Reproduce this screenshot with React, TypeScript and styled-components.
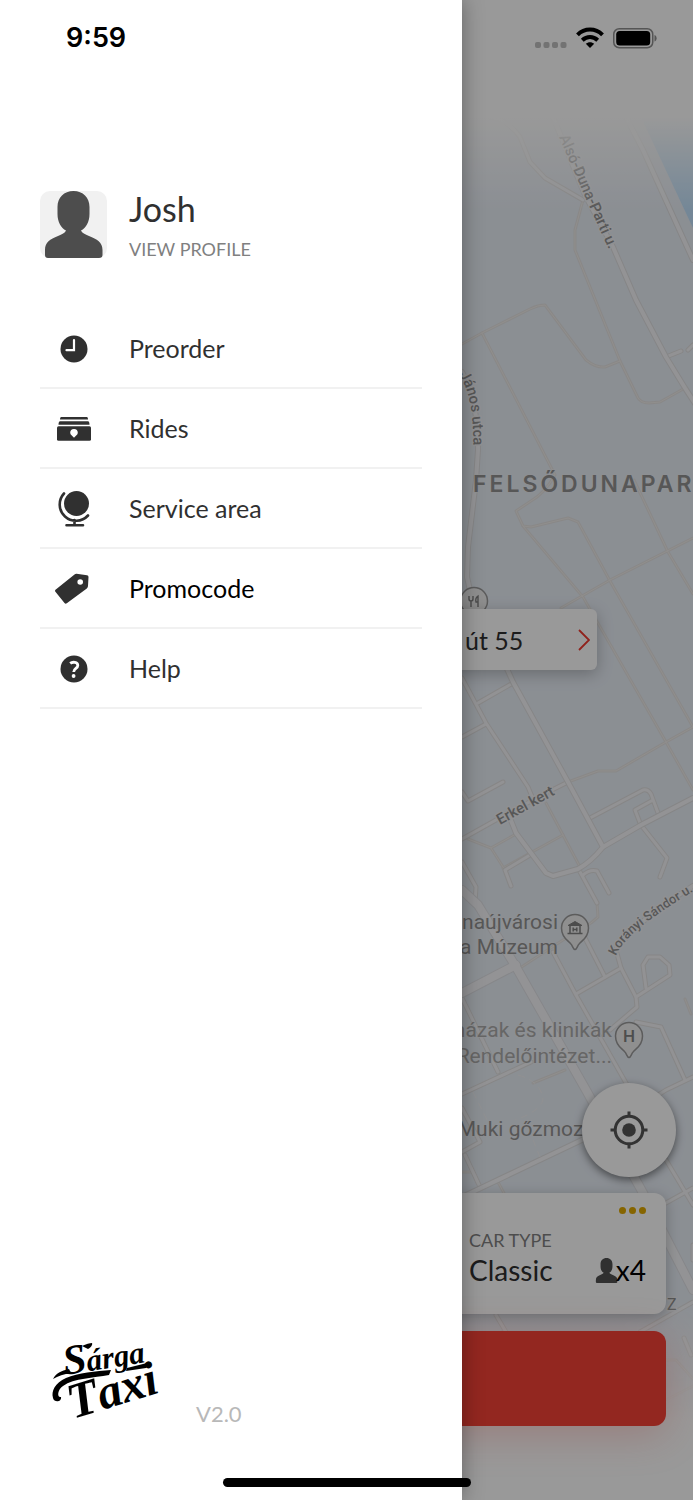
import React from "react";
import styled, { createGlobalStyle } from "styled-components";

const GlobalStyle = createGlobalStyle`
  *, *::before, *::after { box-sizing: border-box; }
  body { margin: 0; background: #ffffff; font-family: Lato, "Liberation Sans", sans-serif; }
  button { border: 0; padding: 0; background: none; font: inherit; color: inherit; text-align: left; cursor: pointer; }
  a { color: inherit; text-decoration: none; }
  svg { display: block; }
`;

const Screen = styled.div`
  position: relative;
  min-height: 100vh;
  display: flex;
  flex-direction: column;
  overflow: hidden;
`;

const MapLayer = styled.div`
  position: absolute;
  inset: 0;
  svg { width: 100%; height: 100%; }
`;

const Booking = styled.main`
  position: relative;
  flex: 1;
  display: flex;
  flex-direction: column;
  padding: 609px 27px 74px;
`;

const AddressCard = styled.button`
  display: flex;
  align-items: center;
  justify-content: space-between;
  height: 61px;
  margin: 0 69px 24px;
  padding: 0 7px 0 369px;
  border-radius: 6px;
  background: #ffffff;
  color: #303030;
  font-size: 25px;
  box-shadow: 0 4px 16px rgba(0, 0, 0, 0.25);
`;

const LocateButton = styled.button`
  display: flex;
  align-items: center;
  justify-content: center;
  align-self: flex-end;
  width: 94px;
  height: 94px;
  margin: auto -10px 16px 0;
  border-radius: 50%;
  background: #ffffff;
  box-shadow: 0 3px 8px rgba(0, 0, 0, 0.5);
`;

const CarCard = styled.section`
  display: flex;
  flex-direction: column;
  align-items: flex-end;
  height: 121px;
  margin-bottom: 17px;
  padding: 14px 20px 12px;
  border-radius: 12px;
  background: #ffffff;
  box-shadow: 0 3px 14px rgba(0, 0, 0, 0.25);
`;

const MoreButton = styled.button`
  display: flex;
  gap: 3px;
  height: 8px;
  margin-bottom: 13px;
`;

const Dot = styled.span`
  width: 7px;
  height: 7px;
  border-radius: 50%;
  background: #e0a800;
`;

const CarInfo = styled.div`
  width: 177px;
`;

const Caption = styled.div`
  font-size: 18px;
  line-height: 24px;
  color: #808080;
`;

const CarRow = styled.div`
  display: flex;
  align-items: center;
  justify-content: space-between;
  font-size: 28px;
  line-height: 36px;
  color: #303030;
`;

const Seats = styled.span`
  display: flex;
  align-items: center;
  color: #000000;
  svg { margin-right: -3px; }
`;

const OrderButton = styled.button`
  height: 95px;
  border-radius: 12px;
  background: #f54136;
  box-shadow: 0 8px 40px rgba(245, 65, 54, 0.25);
`;

const Dim = styled.div`
  position: absolute;
  inset: 0;
  background: rgba(0, 0, 0, 0.4);
`;

const Drawer = styled.aside`
  position: absolute;
  top: 0;
  bottom: 0;
  left: 0;
  width: calc(100% * 2 / 3);
  display: flex;
  flex-direction: column;
  padding: 191px 40px 80px;
  background: #ffffff;
  box-shadow: 0 0 20px rgba(0, 0, 0, 0.35);
`;

const Profile = styled.a`
  display: flex;
  gap: 22px;
  margin-bottom: 48px;
`;

const Avatar = styled.span`
  width: 67px;
  height: 67px;
  border-radius: 10px;
  background: #f1f1f1;
`;

const ProfileText = styled.span`
  display: flex;
  flex-direction: column;
`;

const Name = styled.span`
  font-size: 34px;
  line-height: 36px;
  color: #303030;
`;

const ProfileCaption = styled(Caption)`
  margin-top: 10px;
`;

const Menu = styled.ul`
  margin: 0;
  padding: 0;
  list-style: none;
`;

const MenuItem = styled.li`
  border-bottom: 2px solid #f1f1f1;
`;

const MenuLink = styled.a<{ $active?: boolean }>`
  display: flex;
  align-items: center;
  gap: 22px;
  height: 78px;
  font-size: 25px;
  line-height: 32px;
  color: ${(p) => (p.$active ? "#000000" : "#303030")};
`;

const MenuIcon = styled.span`
  display: flex;
  justify-content: center;
  width: 67px;
  padding-top: 2px;
`;

const Footer = styled.footer`
  display: flex;
  align-items: flex-end;
  gap: 32px;
  margin-top: auto;
  padding-left: 12px;
`;

const Version = styled.span`
  font-size: 22px;
  line-height: 28px;
  margin-bottom: -8px;
  color: #b8b8b8;
`;

const StatusBar = styled.header`
  position: absolute;
  top: 0;
  left: 0;
  right: 0;
  display: flex;
  align-items: center;
  justify-content: space-between;
  height: 76px;
  padding: 0 36px 0 66px;
  color: #000000;
  font: 600 27px/32px Inter, "Liberation Sans", sans-serif;
`;

const HomeIndicator = styled.div`
  position: absolute;
  bottom: 13px;
  left: 50%;
  width: 248px;
  height: 9px;
  border-radius: 5px;
  background: #000000;
  transform: translateX(-50%);
`;

const PersonShape = ({ size, fill }: { size: number; fill: string }) => (
  <svg width={size} height={size} viewBox="0 0 67 67" fill={fill} aria-hidden="true">
    <path d="M33.500 0C43 0 49.500 6.500 49.500 16V23C49.500 31 46 37 41 39.500C42 42 45 43 49 45C57 48.500 62.500 51 62.500 59V64Q62.500 67 59 67H8Q5 67 5 64V59C5 51 10 48.500 18 45C22 43 25 42 26 39.500C21 37 17.500 31 17.500 23V16C17.500 6.500 24 0 33.500 0Z" />
  </svg>
);

const ClockIcon = () => (
  <svg width="28" height="28" viewBox="0 0 28 28" aria-hidden="true">
    <circle cx="14" cy="14" r="13.500" fill="#303030" />
    <path d="M14 5V15.200H6.500" fill="none" stroke="#fff" strokeWidth="2.200" strokeLinecap="round" />
  </svg>
);

const RidesIcon = () => (
  <svg width="34" height="24" viewBox="0 0 34 24" fill="#303030" aria-hidden="true">
    <path d="M4 0H30Q31 0 31 2.500H3Q3 0 4 0Z" />
    <path d="M3 4.200H31Q32.500 4.500 32.500 7.800H1.500Q1.500 4.500 3 4.200Z" />
    <rect y="9.300" width="34" height="14.500" rx="1.500" />
    <path d="M17 12A3.800 3.800 0 0 1 20.800 15.800C20.800 18 18.500 18.800 17 20.800C15.500 18.800 13.200 18 13.200 15.800A3.800 3.800 0 0 1 17 12Z" fill="#fff" />
  </svg>
);

const GlobeIcon = () => (
  <svg width="32" height="36" viewBox="0 0 32 36" aria-hidden="true">
    <circle cx="18.500" cy="12.500" r="12.500" fill="#303030" />
    <path d="M6 2.500A15.300 15.300 0 0 0 30 24.500M16.500 29V34M8.500 34.300H25" fill="none" stroke="#303030" strokeWidth="2.600" strokeLinecap="round" />
  </svg>
);

const TagIcon = () => (
  <svg width="38" height="32" viewBox="0 0 38 32" aria-hidden="true">
    <path d="M21.500 .800L32 2.200Q33.500 2.500 33.500 4L33 13Q33 14.500 31.800 15.400L11.800 30.300Q10.500 31.200 9.500 30L.400 18.800Q-.500 17.500 .800 16.500L19.500 1.500Q20.500 .700 21.500 .800Z" fill="#303030" />
    <circle cx="25.200" cy="9" r="2.800" fill="#fff" />
  </svg>
);

const HelpIcon = () => (
  <svg width="28" height="28" viewBox="0 0 28 28" aria-hidden="true">
    <circle cx="14" cy="14" r="13.500" fill="#303030" />
    <path d="M10.200 8.400C12.500 6.500 17.800 6.800 17.800 10.500C17.800 13.500 13.700 13.500 13.700 17" fill="none" stroke="#fff" strokeWidth="2.800" />
    <circle cx="13.600" cy="21" r="1.900" fill="#fff" />
  </svg>
);

const Logo = () => (
  <svg width="112" height="80" viewBox="0 0 112 80" overflow="visible" role="img" aria-label="Sárga Taxi">
    <g fontFamily='"Liberation Serif", serif' fontStyle="italic" fontWeight="700" fill="#000">
      <text x="13" y="35" transform="rotate(-9 13 35)">
        <tspan fontSize="42">S</tspan>
        <tspan fontSize="31">árga</tspan>
      </text>
      <text x="21" y="79" transform="rotate(-17 21 79)">
        <tspan fontSize="50">T</tspan>
        <tspan fontSize="48">axi</tspan>
      </text>
    </g>
    <g fill="#000">
      <path d="M1 39C4 33 9 31 17 29L19 33C12 34 6 36 1 39Z" />
      <path d="M30 6C34 4 38 3 40 3C41 5 38 8 36 9Z" />
      <path d="M59 30C44 31 26 33 14 38C3 43-1 51 1 58C2 63 10 62 9 57C5 58 5 50 11 46C22 38 42 38 57 35Z" />
      <path d="M75 28L99 22L94 28L74 31Z" />
    </g>
  </svg>
);

const WifiIcon = () => (
  <svg width="28" height="22" viewBox="0 0 28 22" aria-hidden="true">
    <g fill="none" stroke="#000" strokeWidth="4">
      <path d="M1.500 7.800C8.500 .800 19.500 .800 26.500 7.800" />
      <path d="M6.300 13.300C10.800 9 17.200 9 21.700 13.300" />
    </g>
    <path d="M14 21L9.800 16.700C12 14.600 16 14.600 18.200 16.700Z" />
  </svg>
);

const BatteryIcon = () => (
  <svg width="44" height="21" viewBox="0 0 44 21" aria-hidden="true">
    <rect x=".750" y=".750" width="39" height="19" rx="5.500" fill="none" stroke="#555" strokeWidth="1.500" />
    <rect x="3.200" y="3" width="34" height="14.500" rx="3.500" />
    <path d="M41.500 7C44.300 8 44.300 12.500 41.500 13.500Z" fill="#555" />
  </svg>
);

const CellIcon = () => (
  <svg width="32" height="7" viewBox="0 0 32 7" fill="#737373" aria-hidden="true">
    {[0, 8.500, 17, 25.500].map((x) => (
      <rect key={x} x={x} y="0" width="6" height="6" rx="2" />
    ))}
  </svg>
);

const StatusIcons = styled.div`
  display: flex;
  align-items: center;
  gap: 9px;
  svg:first-child { margin-top: 14px; }
`;

const LocateIcon = () => (
  <svg width="38" height="38" viewBox="0 0 38 38" aria-hidden="true">
    <circle cx="19" cy="19" r="13.800" fill="none" stroke="#555" strokeWidth="3" />
    <circle cx="19" cy="19" r="6.800" fill="#555" />
    <path d="M19 .500V6M19 32V37.500M.500 19H6M32 19H37.500" stroke="#555" strokeWidth="3" />
  </svg>
);

const ChevronIcon = () => (
  <svg width="12" height="22" viewBox="0 0 12 22" aria-hidden="true">
    <path d="M1 1L11 11L1 21" fill="none" stroke="#f03a30" strokeWidth="1.800" />
  </svg>
);

const lanes = [
  "M462 344L482 333L530 309Q538 305 545 305L586 360Q596 368 605 367L620 361",
  "M583 200L575 230V250L620 361L638 398Q641 403 649 403L660 402L685 388",
  "M482 333L555 475Q545 493 531 501L516 511L523 526L531 527L568 518L578 522L610 581L693 727",
  "M523 526L583 597L666 742L693 790",
  "M634 480L668 552L693 594",
  "M693 538L610 580L561 608",
  "M568 782L598 771H616L666 742L693 727",
  "M546 803L563 835L580 867",
  "M503 868L563 835",
  "M468 839L491 848L516 834M491 848L505 870",
  "M597 903L598 917L591 923L563 940L520 968",
  "M533 1083L565 1070M462 1172H471",
  "M685 999L691 1014M498 1182L505 1195",
  "M666 1360H676L693 1379M693 1386L666 1400",
];

const streets = [
  "M490 117Q508 120 520 137L530 162L545 178L583 200",
  "M666 357L681 351M693 345L688 350",
  "M513 683L478 703M462 737L486 724",
  "M462 678L486 723L528 787L533 799",
  "M503 782L468 801L462 792",
  "M462 839L496 820L546 793L568 782",
  "M590 818L643 790Q648 789 651 794L658 813M653 800L635 810L640 823",
  "M641 825L667 858L660 877",
  "M530 855L505 870L511 886",
  "M462 862L476 887L475 903",
  "M579 870L597 903M583 875Q590 869 597 871L609 893",
  "M585 938L605 977",
  "M553 952L576 995L630 1090",
  "M576 994L621 968L616 950",
  "M621 968L636 997L637 1007L610 1030",
  "M636 997L670 975L669 965L660 957H648L643 965L646 988",
  "M636 1022L661 1027L685 1080",
  "M693 1077L666 1090L655 1097",
  "M462 998L498 1072",
  "M462 1094L531 1062",
  "M462 1152L480 1142L462 1108M465 1155L480 1187",
  "M666 1160L693 1205M666 1203L693 1188",
  "M693 1302L640 1332M496 1315L506 1332L488 1337",
  "M684 1338L691 1355M693 1245V1260",
];

const roads = [
  "M553 117L585 195L613 247L636 300L666 357L685 388L696 405",
  "M626 117L643 150L693 260",
  "M462 372Q478 400 478 450L476 480L468 547L467 577L471 595",
  "M503 660L513 682L568 782L603 847",
  "M510 818L516 833L546 873L553 876L578 869Q591 862 603 847L641 825L693 798",
  "M616 950Q636 921 693 886",
  "M462 1197L586 1138",
];

const avenues = [
  "M462 890L478 905L516 967L586 1090L643 1193L693 1290",
  "M462 993L516 965",
];

const Roads = ({ paths, width, core, edge }: { paths: string[]; width: number; core: string; edge: string }) => (
  <g fill="none" strokeLinecap="round" strokeLinejoin="round">
    {paths.map((d) => (
      <path key={d} d={d} stroke={edge} strokeWidth={width + 2} />
    ))}
    {paths.map((d) => (
      <path key={d} d={d} stroke={core} strokeWidth={width} />
    ))}
  </g>
);

const Pin = ({ x, y, children }: { x: number; y: number; children: React.ReactNode }) => (
  <g transform={`translate(${x} ${y})`}>
    <path d="M0 21.500C-2 21.500-2 18-4.500 15.500C-6.500 13-13.500 10-13.500 0A13.500 13.500 0 0 1 13.500 0C13.500 10 6.500 13 4.500 15.500C2 18 2 21.500 0 21.500Z" fill="#efefef" stroke="#999" strokeWidth="1.500" />
    {children}
  </g>
);

const CityMap = () => (
  <svg viewBox="0 0 693 1500" preserveAspectRatio="xMaxYMin slice" role="img" aria-label="City map">
    <defs>
      <linearGradient id="fadeTop" x1="0" y1="0" x2="0" y2="1">
        <stop offset="0" stopColor="#fff" />
        <stop offset=".560" stopColor="#fff" />
        <stop offset="1" stopColor="#fff" stopOpacity="0" />
      </linearGradient>
      <linearGradient id="fadeBottom" x1="0" y1="0" x2="0" y2="1">
        <stop offset="0" stopColor="#fff" stopOpacity="0" />
        <stop offset=".600" stopColor="#fff" />
        <stop offset="1" stopColor="#fff" />
      </linearGradient>
      <path id="riverside" d="M559 137L582 190L618 270" />
      <path id="janos" d="M459 374C470 392 475 415 473 470" />
      <path id="koranyi" d="M616 956C624 936 650 917 720 875" />
    </defs>
    <rect width="693" height="1500" fill="#e8eef6" />
    <path d="M640 115H693V228Z" fill="#c2e2fc" />
    <Roads paths={lanes} width={1} core="#f0eeec" edge="#e5e3e2" />
    <Roads paths={streets} width={3} core="#f3f4f7" edge="#e0dfdf" />
    <Roads paths={roads} width={4} core="#f5f6f9" edge="#dfdfe0" />
    <Roads paths={avenues} width={8} core="#f5f6f9" edge="#e0e1e5" />
    <path d="M473 1092L490 1126M518 1075Q542 1082 543 1100Q539 1112 515 1120M533 1140L540 1157" fill="none" stroke="#f2f2f2" strokeWidth="1" strokeDasharray="7 5" />
    <g fontFamily="Roboto, sans-serif" fill="#929292" stroke="#f0f1f4" strokeWidth="3" paintOrder="stroke" strokeLinejoin="round">
      <g fontSize="15" fontWeight="500">
        <text><textPath href="#riverside">Alsó-Duna-Parti u.</textPath></text>
        <text><textPath href="#janos">János utca</textPath></text>
        <text fontSize="13"><textPath href="#koranyi">Korányi Sándor u.</textPath></text>
        <text x="500" y="825" transform="rotate(-29 500 825)">Erkel kert</text>
        <text x="667" y="1310" fontSize="16" fontWeight="400">Z</text>
      </g>
      <text x="473" y="492" fontFamily="Inter, sans-serif" fontSize="23" fontWeight="600" letterSpacing="3" strokeWidth="1">FELSŐDUNAPAR</text>
      <g fontSize="21" textAnchor="end" strokeWidth="1">
        <text x="558" y="929">unaújvárosi</text>
        <text x="558" y="954">a Múzeum</text>
        <text x="612" y="1037" fill="#aaaaaa">házak és klinikák</text>
        <text x="612" y="1063" fill="#aaaaaa">Rendelőintézet...</text>
        <text x="595" y="1136">Muki gőzmozd</text>
      </g>
    </g>
    <Pin x={575} y={928}>
      <path d="M-7-2.500L0-6.500L7-2.500Z" fill="#808080" stroke="#808080" strokeWidth="1" />
      <path d="M-5-2V5M5-2V5M-7.500 5.500H7.500M-1.800-.500V3.500M1.800-.500V3.500M-1.800 1.500H1.800" fill="none" stroke="#808080" strokeWidth="1.500" />
    </Pin>
    <Pin x={629} y={1036}>
      <text y="6" fontFamily="Roboto, sans-serif" fontSize="17" fontWeight="500" textAnchor="middle" fill="#808080">H</text>
    </Pin>
    <circle cx="474" cy="601" r="13.500" fill="#efefef" stroke="#999" strokeWidth="1.500" />
    <path d="M469 596V599Q469 601 471 601Q473 601 473 599V596M471 601V607M478 607V596Q475 598 476 602H478" fill="none" stroke="#808080" strokeWidth="1.400" />
    <rect width="693" height="210" fill="url(#fadeTop)" />
    <rect y="1300" width="693" height="200" fill="url(#fadeBottom)" />
  </svg>
);

const menu = [
  { label: "Preorder", icon: <ClockIcon /> },
  { label: "Rides", icon: <RidesIcon /> },
  { label: "Service area", icon: <GlobeIcon /> },
  { label: "Promocode", icon: <TagIcon />, active: true },
  { label: "Help", icon: <HelpIcon /> },
];

export default function App() {
  return (
    <Screen>
      <GlobalStyle />
      <MapLayer>
        <CityMap />
      </MapLayer>
      <Booking>
        <AddressCard type="button">
          <span>út 55</span>
          <ChevronIcon />
        </AddressCard>
        <LocateButton type="button" aria-label="My location">
          <LocateIcon />
        </LocateButton>
        <CarCard>
          <MoreButton type="button" aria-label="More">
            <Dot />
            <Dot />
            <Dot />
          </MoreButton>
          <CarInfo>
            <Caption>CAR TYPE</Caption>
            <CarRow>
              <span>Classic</span>
              <Seats>
                <PersonShape size={25} fill="#505050" />
                x4
              </Seats>
            </CarRow>
          </CarInfo>
        </CarCard>
        <OrderButton type="button" aria-label="Order" />
      </Booking>
      <Dim />
      <Drawer>
        <Profile href="#profile">
          <Avatar>
            <PersonShape size={67} fill="#4d4d4d" />
          </Avatar>
          <ProfileText>
            <Name>Josh</Name>
            <ProfileCaption as="span">VIEW PROFILE</ProfileCaption>
          </ProfileText>
        </Profile>
        <nav>
          <Menu>
            {menu.map((m) => (
              <MenuItem key={m.label}>
                <MenuLink href={`#${m.label}`} $active={m.active}>
                  <MenuIcon>{m.icon}</MenuIcon>
                  {m.label}
                </MenuLink>
              </MenuItem>
            ))}
          </Menu>
        </nav>
        <Footer>
          <Logo />
          <Version>V2.0</Version>
        </Footer>
      </Drawer>
      <StatusBar>
        <span>9:59</span>
        <StatusIcons>
          <CellIcon />
          <WifiIcon />
          <BatteryIcon />
        </StatusIcons>
      </StatusBar>
      <HomeIndicator />
    </Screen>
  );
}
